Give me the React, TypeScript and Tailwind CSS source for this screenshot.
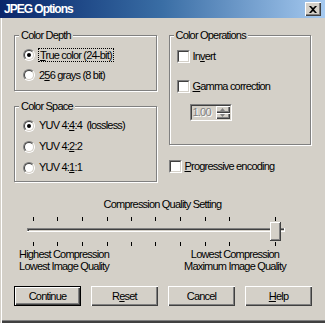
const font = "font-['Liberation_Sans',Arial,sans-serif] text-[11px] leading-[13px] tracking-[-0.8px] text-black";

const topTicks = [33, 57, 82, 107, 131, 155, 180, 205, 229, 275];

function Radio({ checked }: { checked?: boolean }) {
  return (
    <span className="block h-[12px] w-[12px] shrink-0 rounded-full border border-[#808080] border-b-white border-r-white">
      <span className="flex h-full w-full items-center justify-center rounded-full border border-[#404040] border-b-[#d4d0c8] border-r-[#d4d0c8] bg-white">
        {checked && <span className="block h-[4px] w-[4px] rounded-full bg-black" />}
      </span>
    </span>
  );
}

function Check() {
  return (
    <span className="block h-[13px] w-[13px] shrink-0 border border-[#808080] border-b-white border-r-white">
      <span className="block h-full w-full border border-[#404040] border-b-[#d4d0c8] border-r-[#d4d0c8] bg-white" />
    </span>
  );
}

function Group({ title, className, children }: { title: string; className: string; children: React.ReactNode }) {
  return (
    <div className={`relative border border-[#808080] shadow-[inset_1px_1px_0_#fff,1px_1px_0_#fff] ${className}`}>
      <span className="absolute -top-[7px] left-[4px] bg-[#d4d0c8] px-[2px]">{title}</span>
      {children}
    </div>
  );
}

function Button({ children, primary }: { children: React.ReactNode; primary?: boolean }) {
  return (
    <button
      className={
        primary
          ? "flex h-[20px] w-[67px] items-center justify-center border border-black bg-[#d4d0c8] shadow-[inset_1px_1px_0_#fff,inset_-1px_-1px_0_#404040,inset_-2px_-2px_0_#808080]"
          : "flex h-[20px] w-[67px] items-center justify-center bg-[#d4d0c8] shadow-[inset_1px_1px_0_#fff,inset_-1px_-1px_0_#404040,inset_-2px_-2px_0_#808080]"
      }
    >
      {children}
    </button>
  );
}

function Slider() {
  return (
    <svg width="325" height="34" viewBox="0 0 325 34" className="block">
      {topTicks.map((x) => (
        <rect key={`t${x}`} x={x} y={4} width={1} height={4} fill="#000" />
      ))}
      {topTicks.map((x) => (
        <rect key={`b${x}`} x={x} y={29} width={1} height={4} fill="#000" />
      ))}
      {/* sunken track */}
      <rect x={27} y={15} width={258} height={1} fill="#808080" />
      <rect x={27} y={15} width={1} height={4} fill="#808080" />
      <rect x={28} y={16} width={256} height={1} fill="#404040" />
      <rect x={28} y={16} width={1} height={2} fill="#404040" />
      <rect x={27} y={18} width={258} height={1} fill="#fff" />
      <rect x={284} y={15} width={1} height={4} fill="#fff" />
      {/* thumb */}
      <rect x={270} y={9} width={11} height={19} fill="#d4d0c8" />
      <rect x={270} y={9} width={10} height={1} fill="#fff" />
      <rect x={270} y={9} width={1} height={18} fill="#fff" />
      <rect x={279} y={10} width={1} height={17} fill="#808080" />
      <rect x={271} y={26} width={9} height={1} fill="#808080" />
      <rect x={280} y={9} width={1} height={19} fill="#404040" />
      <rect x={270} y={27} width={11} height={1} fill="#404040" />
    </svg>
  );
}

export default function App() {
  return (
    <div className={`flex h-[323px] w-[325px] flex-col overflow-hidden bg-[#d4d0c8] shadow-[inset_1px_0_0_#d4d0c8,inset_2px_0_0_#fff,inset_0_-2px_0_#404040,inset_0_-3px_0_#808080] ${font}`}>
      {/* title bar */}
      <div className="flex h-[18px] shrink-0 items-center justify-between bg-gradient-to-r from-[#0a246a] via-[#3a6ea5] to-[#a6caf0] pl-[4px] pr-[4px]">
        <span className="text-[12px] font-bold tracking-[-1px] text-white">JPEG Options</span>
        <span className="flex h-[14px] w-[16px] items-center justify-center bg-[#d4d0c8] shadow-[inset_1px_1px_0_#fff,inset_-1px_-1px_0_#404040,inset_-2px_-2px_0_#808080]">
          <svg width="8" height="7" viewBox="0 0 8 7">
            <path d="M0 0h2l2 2 2-2h2L5 3.5 8 7H6L4 5 2 7H0l3-3.5z" fill="#000" />
          </svg>
        </span>
      </div>

      {/* option groups */}
      <div className="mt-[17px] flex gap-[12px] px-[14px]">
        <div className="flex w-[143px] flex-col">
          <Group title="Color Depth" className="h-[56px] pl-[8px] pt-[9px]">
            <div className="flex h-[20px] items-center gap-[3px]">
              <Radio checked />
              <span className="border border-dotted border-black px-[1px] leading-[12px]">
                <u>T</u>rue color (24-bit)
              </span>
            </div>
            <div className="flex h-[20px] items-center gap-[4px]">
              <Radio />
              <span>
                2<u>5</u>6 grays (8 bit)
              </span>
            </div>
          </Group>
          <Group title="Color Space" className="mt-[15px] h-[76px] pl-[8px] pt-[8px]">
            <div className="flex h-[21px] items-center gap-[4px]">
              <Radio checked />
              <span>
                YUV 4:<u>4</u>:4&nbsp;&nbsp;(lossless)
              </span>
            </div>
            <div className="flex h-[21px] items-center gap-[4px]">
              <Radio />
              <span>
                YUV 4:<u>2</u>:2
              </span>
            </div>
            <div className="flex h-[21px] items-center gap-[4px]">
              <Radio />
              <span>
                YUV 4:<u>1</u>:1
              </span>
            </div>
          </Group>
        </div>

        <div className="flex w-[143px] flex-col">
          <Group title="Color Operations" className="h-[110px] pl-[7px] pt-[10px]">
            <div className="flex h-[20px] items-center gap-[3px]">
              <Check />
              <span>
                In<u>v</u>ert
              </span>
            </div>
            <div className="mt-[10px] flex h-[20px] items-center gap-[3px]">
              <Check />
              <span>
                <u>G</u>amma correction
              </span>
            </div>
            <div className="ml-[13px] mt-[8px] flex h-[17px] w-[42px] border border-[#808080] border-b-white border-r-white">
              <div className="flex flex-1 border border-[#404040] border-b-[#d4d0c8] border-r-[#d4d0c8]">
                <span className="flex-1 pl-[1px] leading-[13px] text-[#808080] [text-shadow:1px_1px_0_#fff]">1.00</span>
                <div className="flex w-[14px] flex-col">
                  <span className="flex flex-1 items-center justify-center shadow-[inset_1px_1px_0_#fff,inset_-1px_-1px_0_#404040,inset_-2px_-2px_0_#808080]">
                    <svg width="5" height="3" viewBox="0 0 5 3">
                      <path d="M2.5 0L5 3H0z" fill="#808080" />
                    </svg>
                  </span>
                  <span className="flex flex-1 items-center justify-center shadow-[inset_1px_1px_0_#fff,inset_-1px_-1px_0_#404040,inset_-2px_-2px_0_#808080]">
                    <svg width="5" height="3" viewBox="0 0 5 3">
                      <path d="M0 0h5L2.5 3z" fill="#808080" />
                    </svg>
                  </span>
                </div>
              </div>
            </div>
          </Group>
          <div className="mt-[11px] flex h-[20px] items-center gap-[3px]">
            <Check />
            <span>
              <u>P</u>rogressive encoding
            </span>
          </div>
        </div>
      </div>

      {/* compression slider */}
      <div className="mt-[16px] text-center">Compression Quality Setting</div>
      <div className="mt-[2px]">
        <Slider />
      </div>
      <div className="mt-[1px] flex leading-[12px]">
        <div className="ml-[4px] w-[120px] text-center">
          <div>Highest Compression</div>
          <div>Lowest Image Quality</div>
        </div>
        <div className="ml-[51px] w-[120px] text-center">
          <div>Lowest Compression</div>
          <div>Maximum Image Quality</div>
        </div>
      </div>

      {/* buttons */}
      <div className="mt-[14px] flex justify-between pl-[14px] pr-[13px]">
        <Button primary>Continue</Button>
        <Button>
          R<u>e</u>set
        </Button>
        <Button>Cancel</Button>
        <Button>
          <u>H</u>elp
        </Button>
      </div>
    </div>
  );
}
